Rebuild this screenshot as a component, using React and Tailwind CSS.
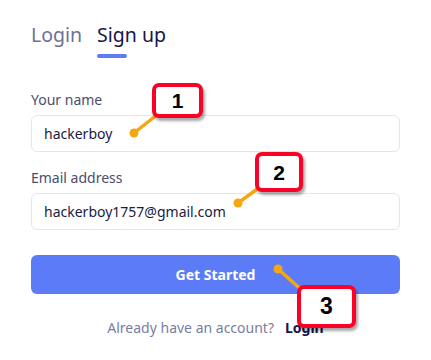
import React from "react";

function Badge({ n, className }) {
  return (
    <div
      className={`absolute flex items-center justify-center bg-white border-[4px] border-[#fd0026] rounded-[7px] shadow-[2px_3px_3px_rgba(0,0,0,0.35)] ${className}`}
    >
      <span className="font-['Liberation_Sans',sans-serif] font-bold text-black leading-none">{n}</span>
    </div>
  );
}

export default function App() {
  return (
    <div className="relative w-[431px] h-[360px] bg-white overflow-hidden font-['Noto_Sans',sans-serif]">
      <div className="px-[31px] pt-[21px]">
        <div className="flex gap-[15px] text-[19.5px] leading-[28px]">
          <span className="text-[#6c7194]">Login</span>
          <div className="flex flex-col items-start">
            <span className="text-[#15164a]">Sign up</span>
            <div className="mt-[5px] w-[30px] h-[4px] rounded-full bg-[#5b7cf6]" />
          </div>
        </div>

        <div className="mt-[32px] text-[14px] leading-[20px] text-[#4b4d6b]">Your name</div>
        <div className="mt-[5px] h-[37px] border border-[#e2e6f0] rounded-[6px] px-[12px] flex items-center text-[14px] text-[#1a1c3d]">
          hackerboy
        </div>

        <div className="mt-[16px] text-[14px] leading-[20px] text-[#4b4d6b]">Email address</div>
        <div className="mt-[5px] h-[37px] border border-[#e2e6f0] rounded-[6px] px-[12px] flex items-center text-[14px] text-[#1a1c3d]">
          hackerboy1757@gmail.com
        </div>

        <div className="mt-[25px] h-[39px] rounded-[6px] bg-[#5b7cf6] flex items-center justify-center text-white font-bold text-[14px]">
          Get Started
        </div>

        <div className="mt-[24px] flex justify-center items-center gap-[11px] text-[14px] leading-[20px]">
          <span className="text-[#7a7e9e]">Already have an account?</span>
          <span className="font-bold text-[#15164a]">Login</span>
        </div>
      </div>

      <svg className="absolute inset-0 pointer-events-none" width="431" height="360">
        <g stroke="#f5a70f" strokeWidth="3.5" strokeLinecap="round">
          <line x1="134" y1="133" x2="158" y2="114" />
          <line x1="238" y1="203" x2="260" y2="187" />
          <line x1="278" y1="269" x2="304" y2="292" />
        </g>
        <g fill="#f5a70f">
          <circle cx="134" cy="133" r="4.5" />
          <circle cx="238" cy="203" r="4.5" />
          <circle cx="278" cy="269" r="4.5" />
        </g>
      </svg>

      <Badge n="1" className="left-[152px] top-[83px] w-[51px] h-[35px] text-[21px]" />
      <Badge n="2" className="left-[255px] top-[152px] w-[48px] h-[40px] text-[21px]" />
      <Badge n="3" className="left-[297px] top-[285px] w-[59px] h-[43px] text-[23px]" />
    </div>
  );
}
